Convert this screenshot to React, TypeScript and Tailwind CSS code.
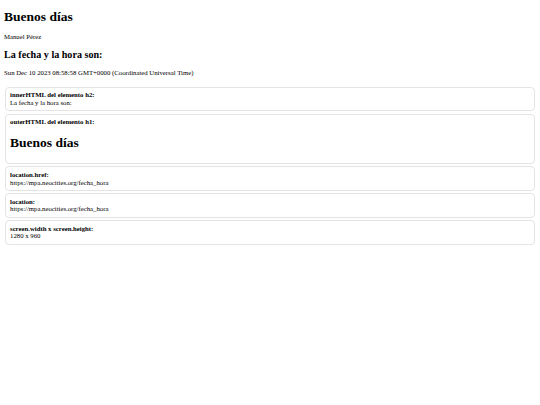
export default function App() {
  const cards = [
    { label: "innerHTML del elemento h2:", value: "La fecha y la hora son:" },
    { label: "outerHTML del elemento h1:", value: "Buenos días", big: true },
    { label: "location.href:", value: "https://mpa.neocities.org/fecha_hora" },
    { label: "location:", value: "https://mpa.neocities.org/fecha_hora" },
    { label: "screen.width x screen.height:", value: "1280 x 960" },
  ];

  return (
    <div className="min-h-[405px] bg-white px-[4px] pt-[9px] font-['Liberation_Serif','Times_New_Roman',serif] text-black">
      {/* Header */}
      <h1 className="text-[13.5px] leading-[15.5px] font-bold">Buenos días</h1>
      <p className="mt-[8.5px] text-[6.75px] leading-[7.7px]">Manuel Pérez</p>
      <h2 className="mt-[8.4px] text-[10.1px] leading-[11.5px] font-bold">La fecha y la hora son:</h2>
      <p className="mt-[8.4px] text-[6.75px] leading-[7.7px]">
        Sun Dec 10 2023 08:58:58 GMT+0000 (Coordinated Universal Time)
      </p>

      {/* Cards */}
      <div className="mt-[10px] mx-[1px] flex flex-col gap-[2.5px]">
        {cards.map((card, idx) => (
          <div
            key={idx}
            className="rounded-[4px] border border-[#e4e4e4] bg-white px-[4px] py-[3.5px] text-[6.75px] leading-[7.7px]"
          >
            <div className="font-bold">{card.label}</div>
            {card.big ? (
              <div className="my-[9px] text-[13.5px] leading-[15.5px] font-bold">{card.value}</div>
            ) : (
              <div>{card.value}</div>
            )}
          </div>
        ))}
      </div>
    </div>
  );
}
